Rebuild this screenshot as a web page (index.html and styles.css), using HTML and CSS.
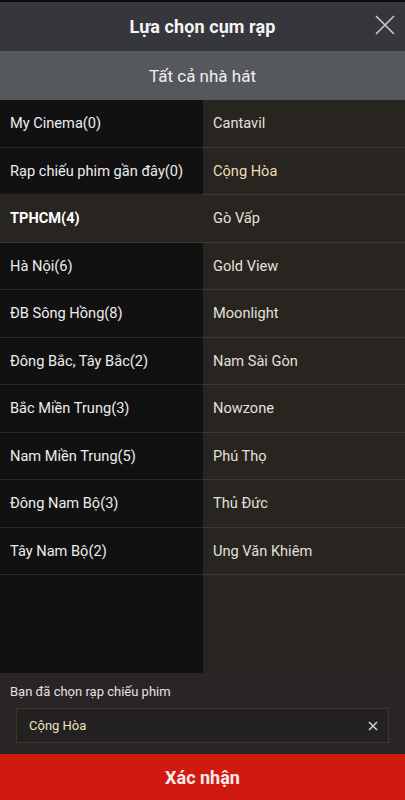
FILE: index.html
```html
<!DOCTYPE html>
<html lang="vi">
<head>
<meta charset="utf-8">
<link rel="stylesheet" href="styles.css">
</head>
<body>
<div class="app">
  <header class="header">
    <h1 class="title">Lựa chọn cụm rạp</h1>
    <button class="close" aria-label="close">
      <svg viewBox="0 0 20 20" width="20" height="20"><path d="M1 1L19 19M19 1L1 19" stroke="#c9cacc" stroke-width="1.6" fill="none"/></svg>
    </button>
  </header>
  <div class="subheader">Tất cả nhà hát</div>
  <div class="lists">
    <ul class="col left">
      <li class="row">My Cinema(0)</li>
      <li class="row">Rạp chiếu phim gần đây(0)</li>
      <li class="row active">TPHCM(4)</li>
      <li class="row">Hà Nội(6)</li>
      <li class="row">ĐB Sông Hồng(8)</li>
      <li class="row">Đông Bắc, Tây Bắc(2)</li>
      <li class="row">Bắc Miền Trung(3)</li>
      <li class="row">Nam Miền Trung(5)</li>
      <li class="row">Đông Nam Bộ(3)</li>
      <li class="row">Tây Nam Bộ(2)</li>
    </ul>
    <ul class="col right">
      <li class="row">Cantavil</li>
      <li class="row picked">Cộng Hòa</li>
      <li class="row">Gò Vấp</li>
      <li class="row">Gold View</li>
      <li class="row">Moonlight</li>
      <li class="row">Nam Sài Gòn</li>
      <li class="row">Nowzone</li>
      <li class="row">Phú Thọ</li>
      <li class="row">Thủ Đức</li>
      <li class="row">Ung Văn Khiêm</li>
    </ul>
  </div>
  <div class="selected">
    <div class="selected-label">Bạn đã chọn rạp chiếu phim</div>
    <div class="chip">
      <span class="chip-text">Cộng Hòa</span>
      <svg class="chip-x" viewBox="0 0 10 10" width="10" height="10"><path d="M1 1L9 9M9 1L1 9" stroke="#d8d4cc" stroke-width="1.5" fill="none"/></svg>
    </div>
  </div>
  <button class="confirm">Xác nhận</button>
</div>
</body>
</html>
```
FILE: styles.css
```css
* { box-sizing: border-box; }
html, body { margin: 0; padding: 0; background: #121112; }
body { font-family: Roboto, "Noto Sans", "Liberation Sans", sans-serif; color: #ececec; }
.app { width: 405px; height: 800px; display: flex; flex-direction: column; overflow: hidden; }
.header {
  height: 51px; flex: none; background: #35373c; border-top: 2px solid #0c0c0d;
  display: flex; align-items: center; justify-content: center; position: relative;
}
.title { margin: 0; font-size: 18px; font-weight: 700; color: #f4f4f4; letter-spacing: 0.1px; }
.close {
  position: absolute; right: 10px; top: 13px; width: 20px; height: 20px;
  padding: 0; border: 0; background: transparent; display: flex;
}
.subheader {
  height: 49px; flex: none; background: #55585d; color: #f0f0f0; font-size: 17px;
  display: flex; align-items: center; justify-content: center;
}
.lists { height: 573px; flex: none; display: flex; }
.col { list-style: none; margin: 0; padding: 0; }
.left { width: 203px; background: #121112; }
.right { flex: 1; background: #28241f; }
.row {
  height: 47.5px; display: flex; align-items: center; font-size: 14.6px;
  border-bottom: 1px solid #2b2a2b; color: #ececec;
}
.left .row { padding-left: 10px; }
.right .row { padding-left: 10px; border-bottom-color: #3c3731; color: #e2e0dc; }
.left .row.active { background: #28241f; font-weight: 700; color: #ffffff; border-bottom-color: #3c3731; }
.right .row.picked { color: #ecdfb2; }
.selected { flex: 1; background: #292526; padding: 10px 16px 0 16px; }
.selected-label { font-size: 13px; color: #e4e2e2; margin-left: -6px; height: 17px; line-height: 17px; }
.chip {
  margin-top: 8px; height: 35px; border: 1px solid #3a3a1c; background: #242122;
  display: flex; align-items: center; justify-content: space-between; padding: 0 10px 0 12px;
}
.chip-text { font-size: 13px; color: #ece2bd; }
.chip-x { margin-right: 0; }
.confirm {
  height: 46px; flex: none; border: 0; background: #d01a0f; color: #fbeaea;
  font-family: Roboto, "Noto Sans", "Liberation Sans", sans-serif;
  font-size: 18px; font-weight: 700; padding: 0; width: 100%;
}
```
